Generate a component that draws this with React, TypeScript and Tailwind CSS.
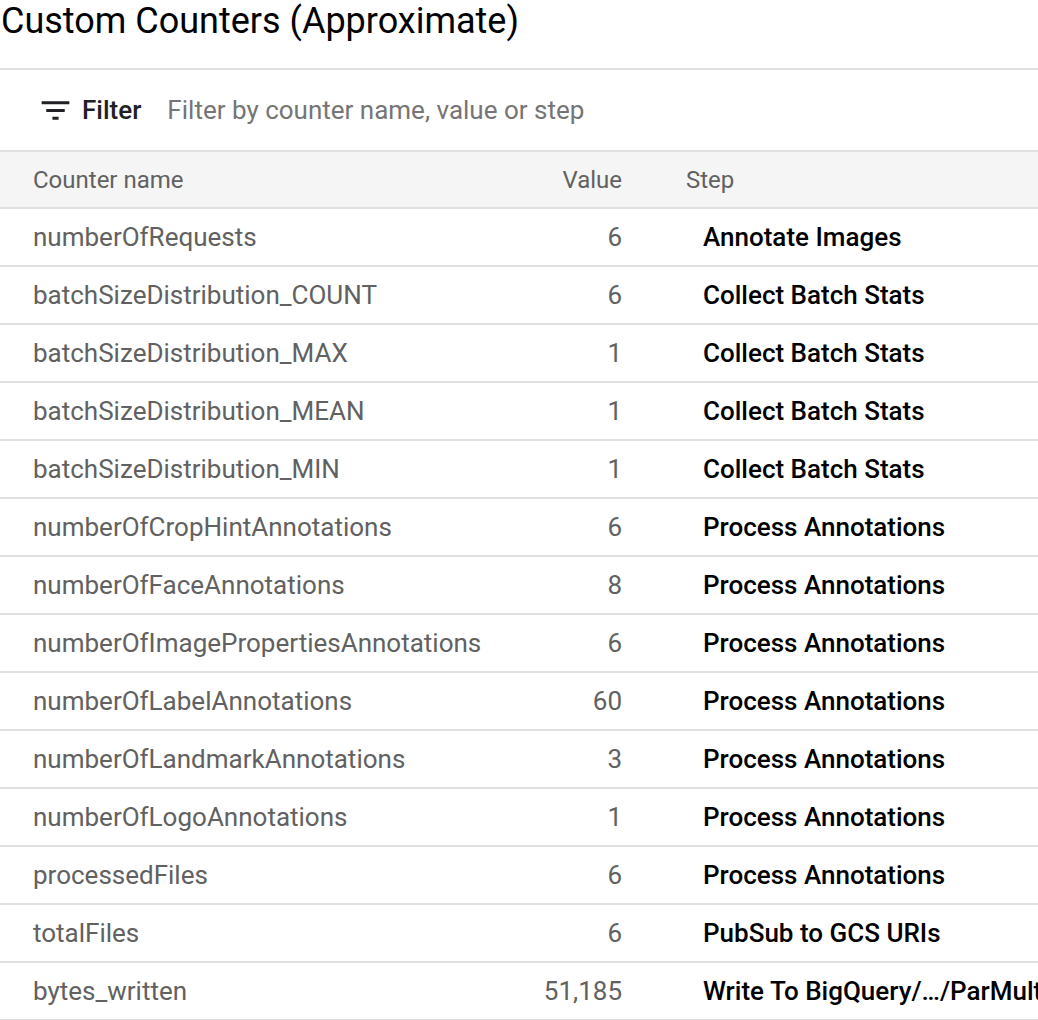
const rows: [string, string, string][] = [
  ["numberOfRequests", "6", "Annotate Images"],
  ["batchSizeDistribution_COUNT", "6", "Collect Batch Stats"],
  ["batchSizeDistribution_MAX", "1", "Collect Batch Stats"],
  ["batchSizeDistribution_MEAN", "1", "Collect Batch Stats"],
  ["batchSizeDistribution_MIN", "1", "Collect Batch Stats"],
  ["numberOfCropHintAnnotations", "6", "Process Annotations"],
  ["numberOfFaceAnnotations", "8", "Process Annotations"],
  ["numberOfImagePropertiesAnnotations", "6", "Process Annotations"],
  ["numberOfLabelAnnotations", "60", "Process Annotations"],
  ["numberOfLandmarkAnnotations", "3", "Process Annotations"],
  ["numberOfLogoAnnotations", "1", "Process Annotations"],
  ["processedFiles", "6", "Process Annotations"],
  ["totalFiles", "6", "PubSub to GCS URIs"],
  ["bytes_written", "51,185", "Write To BigQuery/…/ParMultiDo(StreamingWrite)"],
];

function FilterIcon() {
  return (
    <svg viewBox="0 0 24 24" className="h-[37px] w-[37px] shrink-0" fill="#202124">
      <path d="M10 18h4v-2h-4v2zM3 6v2h18V6H3zm3 7h12v-2H6v2z" />
    </svg>
  );
}

export default function App() {
  return (
    <div className="h-[1020px] w-[1038px] overflow-hidden bg-white font-['Roboto',sans-serif]">
      {/* title */}
      <h1 className="h-[68px] pl-[1px] text-[36px] leading-[42px] font-normal text-black">
        Custom Counters (Approximate)
      </h1>

      <div className="border-t-2 border-[#e0e0e0]">
        {/* filter bar */}
        <div className="flex h-[80px] items-center pl-[37px]">
          <FilterIcon />
          <span className="ml-[8px] text-[26px] font-medium text-[#202124]">Filter</span>
          <span className="ml-[26px] text-[26px] text-[#757575]">
            Filter by counter name, value or step
          </span>
        </div>

        {/* header */}
        <div className="flex h-[59px] items-center border-y-2 border-[#e0e0e0] bg-[#f5f5f5] text-[24px] text-[#616161]">
          <div className="w-[500px] pl-[33px]">Counter name</div>
          <div className="w-[122px] text-right">Value</div>
          <div className="pl-[64px]">Step</div>
        </div>

        {rows.map(([name, value, step]) => (
          <div
            key={name}
            className="flex h-[58px] items-center border-b-2 border-[#e0e0e0] text-[26px]"
          >
            <div className="w-[500px] pl-[33px] text-[#616161]">{name}</div>
            <div className="w-[122px] text-right text-[#616161]">{value}</div>
            <div className="min-w-0 flex-1 overflow-hidden pl-[81px] font-medium whitespace-nowrap text-black">
              {step}
            </div>
          </div>
        ))}
      </div>
    </div>
  );
}
